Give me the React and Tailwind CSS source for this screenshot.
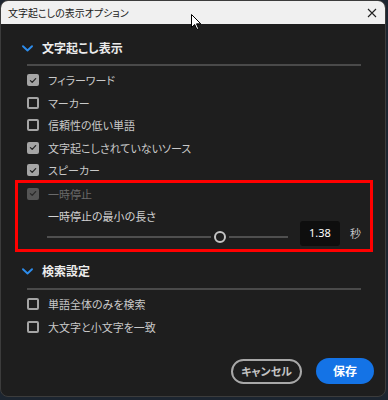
const jp = { fontFamily: '"Noto Sans CJK JP", "Noto Sans", sans-serif', fontFeatureSettings: '"palt"' };

function Check({ checked, disabled }) {
    const border = disabled ? 'border-[#555]' : 'border-[#a5a5a5]';
    const fill = checked ? (disabled ? 'bg-[#555]' : 'bg-[#a5a5a5]') : 'bg-transparent';
    return (
        <span className={`flex h-[12px] w-[12px] shrink-0 items-center justify-center rounded-[2px] border-2 ${border} ${fill}`}>
            {checked && (
                <svg width="9" height="9" viewBox="0 0 10 10" fill="none">
                    <path d="M1.8 5.2l2.2 2.2 4.3-4.8" stroke={disabled ? '#2a2a2a' : '#262626'} strokeWidth="1.6" strokeLinecap="round" strokeLinejoin="round" />
                </svg>
            )}
        </span>
    );
}

function Row({ label, checked, disabled }) {
    return (
        <div className="flex h-[22.5px] items-center">
            <Check checked={checked} disabled={disabled} />
            <span className={`ml-[9px] text-[11px] ${disabled ? 'text-[#6a6a6a]' : 'text-[#c9c9c9]'}`}>{label}</span>
        </div>
    );
}

function SectionHeader({ title }) {
    return (
        <div className="flex h-[20px] items-center">
            <svg width="11" height="7" viewBox="0 0 11 7" fill="none" className="ml-[-5px]">
                <path d="M1 1.2l4.5 4.3L10 1.2" stroke="#2d8ceb" strokeWidth="1.9" strokeLinecap="round" strokeLinejoin="round" />
            </svg>
            <span className="ml-[9px] text-[12px] font-bold text-[#ececec]">{title}</span>
        </div>
    );
}

function Divider({ className }) {
    return <div className={`h-[2px] w-[334px] bg-[#4a4a4a] ${className}`} />;
}

export default function App() {
    return (
        <div className="relative h-[400px] w-[388px] overflow-hidden bg-[#1c2530]" style={jp}>
            <div className="flex h-[397px] w-[386px] flex-col overflow-hidden rounded-[8px] border border-[#3c3c3c] bg-[#1e1e1e]">
                <div className="flex h-[23px] shrink-0 items-center justify-between bg-[#f0f0f0] pl-[7px] pr-[8px]">
                    <span className="text-[10px] text-[#1a1a1a]">文字起こしの表示オプション</span>
                    <svg width="10" height="10" viewBox="0 0 10 10">
                        <path d="M1 1l8 8M9 1L1 9" stroke="#222" strokeWidth="1.1" />
                    </svg>
                </div>

                <div className="flex flex-1 flex-col pl-[26px]">
                    <div className="mt-[14px]">
                        <SectionHeader title="文字起こし表示" />
                    </div>
                    <Divider className="mt-[6px]" />
                    <div className="mt-[3px] flex flex-col">
                        <Row label="フィラーワード" checked />
                        <Row label="マーカー" />
                        <Row label="信頼性の低い単語" />
                        <Row label="文字起こしされていないソース" checked />
                        <Row label="スピーカー" checked />
                    </div>

                    <div className="ml-[-12px] mt-[-2px] w-[358px] border-[3px] border-[#ff0000] pb-[3px] pl-[9px]">
                        <Row label="一時停止" checked disabled />
                        <div className="mt-[3px] flex h-[16px] items-center pl-[21px] text-[11px] text-[#d2d2d2]">
                            一時停止の最小の長さ
                        </div>
                        <div className="mt-[-3px] flex h-[25px] items-center pl-[20px]">
                            <div className="flex w-[244px] items-center pt-[6px]">
                                <div className="h-[2px] w-[164px] bg-[#4f4f4f]" />
                                <div className="mx-[3px] h-[12px] w-[12px] rounded-full border-2 border-[#c4c4c4] bg-[#1e1e1e]" />
                                <div className="h-[2px] w-[59px] bg-[#4f4f4f]" />
                            </div>
                            <div className="ml-[9px] flex h-[25px] w-[40px] items-center justify-center rounded-[3px] bg-[#0e0e0e] text-[11px] text-white" style={{ fontFamily: '"Noto Sans", sans-serif' }}>
                                1.38
                            </div>
                            <span className="ml-[10px] text-[11px] text-[#c9c9c9]">秒</span>
                        </div>
                    </div>

                    <div className="mt-[9px]">
                        <SectionHeader title="検索設定" />
                    </div>
                    <Divider className="mt-[7px]" />
                    <div className="mt-[3px] flex flex-col">
                        <Row label="単語全体のみを検索" />
                        <Row label="大文字と小文字を一致" />
                    </div>

                    <div className="mt-[20px] flex items-center justify-end gap-[14px] pr-[11px]">
                        <button className="flex h-[25px] w-[71px] items-center justify-center rounded-full border-2 border-[#a8a8a8] text-[11px] font-bold text-[#c4c4c4]">
                            キャンセル
                        </button>
                        <button className="flex h-[26px] w-[58px] items-center justify-center rounded-full bg-[#1473e6] text-[12px] font-bold text-white">
                            保存
                        </button>
                    </div>
                </div>
            </div>

            <svg className="absolute left-[191px] top-[14px]" width="11" height="16" viewBox="0 0 11 16">
                <path d="M0.5 0.5v13l3.2-3 2.2 5 1.8-0.8-2.2-4.9h4.3z" fill="#fff" stroke="#000" strokeWidth="1" strokeLinejoin="round" />
            </svg>
        </div>
    );
}
